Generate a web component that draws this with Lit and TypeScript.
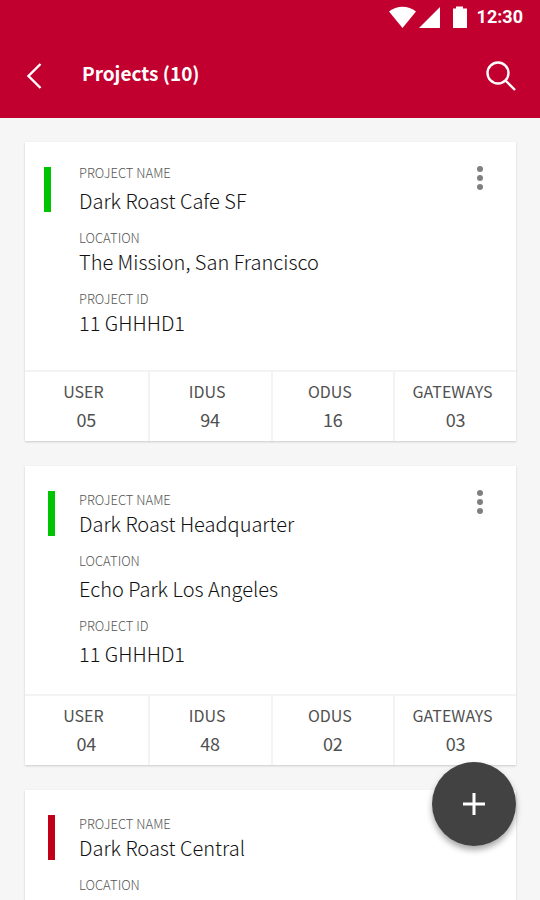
import { LitElement, html, css, nothing } from "lit";
import { customElement, property } from "lit/decorators.js";
import { classMap } from "lit/directives/class-map.js";

interface Field {
  label: string;
  value?: string;
  roomy?: boolean;
}

interface Project {
  status: "ok" | "alert";
  fields: Field[];
  stats: [string, string][];
}

const projects: Project[] = [
  {
    status: "ok",
    fields: [
      { label: "PROJECT NAME", value: "Dark Roast Cafe SF", roomy: true },
      { label: "LOCATION", value: "The Mission, San Francisco" },
      { label: "PROJECT ID", value: "11 GHHHD1" },
    ],
    stats: [["USER", "05"], ["IDUS", "94"], ["ODUS", "16"], ["GATEWAYS", "03"]],
  },
  {
    status: "ok",
    fields: [
      { label: "PROJECT NAME", value: "Dark Roast Headquarter" },
      { label: "LOCATION", value: "Echo Park Los Angeles", roomy: true },
      { label: "PROJECT ID", value: "11 GHHHD1", roomy: true },
    ],
    stats: [["USER", "04"], ["IDUS", "48"], ["ODUS", "02"], ["GATEWAYS", "03"]],
  },
  {
    status: "alert",
    fields: [
      { label: "PROJECT NAME", value: "Dark Roast Central" },
      { label: "LOCATION" },
    ],
    stats: [],
  },
];

@customElement("project-card")
export class ProjectCard extends LitElement {
  @property({ attribute: false }) project!: Project;

  static styles = css`
    :host {
      display: block;
      flex: none;
      background: #fff;
      box-shadow: 0 1px 2px rgba(0, 0, 0, 0.18);
    }
    .body {
      display: flex;
      align-items: flex-start;
      min-height: 228px;
      padding: 23px 24px 16px 19px;
      box-sizing: border-box;
    }
    .mark {
      flex: none;
      width: 7px;
      height: 45px;
      margin: 2px 28px 0 0;
      background: #00c400;
    }
    .compact .mark {
      margin: 2px 24px 0 4px;
    }
    .mark.alert {
      background: #c00018;
    }
    .fields {
      flex: 1;
      display: flex;
      flex-direction: column;
      gap: 17px;
      margin: 0;
    }
    .compact .fields {
      margin-top: 3px;
    }
    .field {
      display: flex;
      flex-direction: column;
      gap: 4px;
    }
    .field.roomy {
      gap: 8px;
    }
    dt,
    dd {
      margin: 0;
    }
    .label {
      font-size: 13px;
      line-height: 16px;
      font-weight: 300;
      color: #555;
    }
    .value {
      font-size: 20px;
      line-height: 24px;
      font-weight: 300;
      color: #111;
    }
    .more {
      flex: none;
      width: 24px;
      height: 24px;
      margin-top: 1px;
      padding: 0;
      border: 0;
      background: none;
    }
    svg {
      display: block;
    }
    .stats {
      display: grid;
      grid-template-columns: repeat(4, 1fr);
      margin: 0;
      border-top: 2px solid #f3f3f3;
    }
    .stat {
      padding: 6px 0 7px;
      text-align: center;
      color: #505050;
    }
    .stat + .stat {
      border-left: 2px solid #f3f3f3;
    }
    .stat dt {
      padding-right: 6px;
      font-size: 16px;
      line-height: 26px;
    }
    .stat dd {
      font-size: 18px;
      line-height: 30px;
    }
  `;

  render() {
    const { status, fields, stats } = this.project;
    return html`
      <div class=${classMap({ body: true, compact: !fields[0].roomy })}>
        <span class=${classMap({ mark: true, alert: status === "alert" })}></span>
        <dl class="fields">
          ${fields.map(
            (f) => html`<div class=${classMap({ field: true, roomy: !!f.roomy })}>
              <dt class="label">${f.label}</dt>
              ${f.value ? html`<dd class="value">${f.value}</dd>` : nothing}
            </div>`
          )}
        </dl>
        <button class="more" aria-label="More options">
          <svg width="24" height="24" viewBox="0 0 24 24" fill="#808080">
            <circle cx="12" cy="3" r="3" />
            <circle cx="12" cy="12" r="3" />
            <circle cx="12" cy="21" r="3" />
          </svg>
        </button>
      </div>
      ${stats.length
        ? html`<dl class="stats">
            ${stats.map(([k, v]) => html`<div class="stat"><dt>${k}</dt><dd>${v}</dd></div>`)}
          </dl>`
        : nothing}
    `;
  }
}

@customElement("app-root")
export class AppRoot extends LitElement {
  static styles = css`
    :host {
      display: flex;
      flex-direction: column;
      position: relative;
      height: 100vh;
      overflow: hidden;
      background: #f6f6f6;
      font-family: "Noto Sans CJK SC", "Noto Sans", sans-serif;
    }
    header {
      flex: none;
      background: #c2002f;
      color: #fff;
    }
    .status {
      display: flex;
      justify-content: flex-end;
      align-items: center;
      height: 34px;
      padding-right: 17px;
    }
    .time {
      margin-left: 8px;
      font: 700 18px/24px Roboto, sans-serif;
    }
    .bar {
      display: flex;
      align-items: center;
      height: 84px;
      padding: 0 26px 0 20px;
      box-sizing: border-box;
    }
    h1 {
      flex: 1;
      margin: 0 0 6px 34px;
      font-size: 19px;
      line-height: 28px;
      font-weight: 700;
    }
    button {
      display: grid;
      place-items: center;
      padding: 0;
      border: 0;
      background: none;
      color: #fff;
    }
    .icon {
      width: 28px;
      height: 32px;
    }
    svg {
      display: block;
    }
    main {
      flex: 1;
      min-height: 0;
      overflow: hidden;
      display: flex;
      flex-direction: column;
      gap: 25px;
      padding: 24px 24px 0 25px;
    }
    .fab {
      position: absolute;
      right: 24px;
      bottom: 54px;
      width: 84px;
      height: 84px;
      border-radius: 50%;
      background: #424242;
      box-shadow: 0 4px 6px rgba(0, 0, 0, 0.35);
    }
  `;

  render() {
    return html`
      <header>
        <div class="status">
          <svg width="80" height="24" viewBox="0 0 80 24" fill="#fff">
            <path d="M0 6.500C7.500 0 19.500 0 27 6.500L13.500 23Z" />
            <path d="M51 2V23H30Z" />
            <path d="M67 1.500H74V3.500H78V23H64V3.500H67Z" />
          </svg>
          <span class="time">12:30</span>
        </div>
        <div class="bar">
          <button class="icon" aria-label="Back">
            <svg width="28" height="28" viewBox="0 0 28 28" fill="none" stroke="#fff" stroke-width="2.400">
              <path d="M20.500 2L8.500 14L20.500 26" />
            </svg>
          </button>
          <h1>Projects (10)</h1>
          <button class="icon" aria-label="Search">
            <svg width="30" height="32" viewBox="0 0 30 32" fill="none" stroke="#fff" stroke-width="2.400">
              <circle cx="12" cy="13" r="10.500" />
              <path d="M19.500 20.500L29 30" />
            </svg>
          </button>
        </div>
      </header>
      <main>${projects.map((p) => html`<project-card .project=${p}></project-card>`)}</main>
      <button class="fab" aria-label="Add project">
        <svg width="24" height="24" viewBox="0 0 24 24" fill="none" stroke="#fff" stroke-width="3">
          <path d="M12 1V23M1 12H23" />
        </svg>
      </button>
    `;
  }
}
